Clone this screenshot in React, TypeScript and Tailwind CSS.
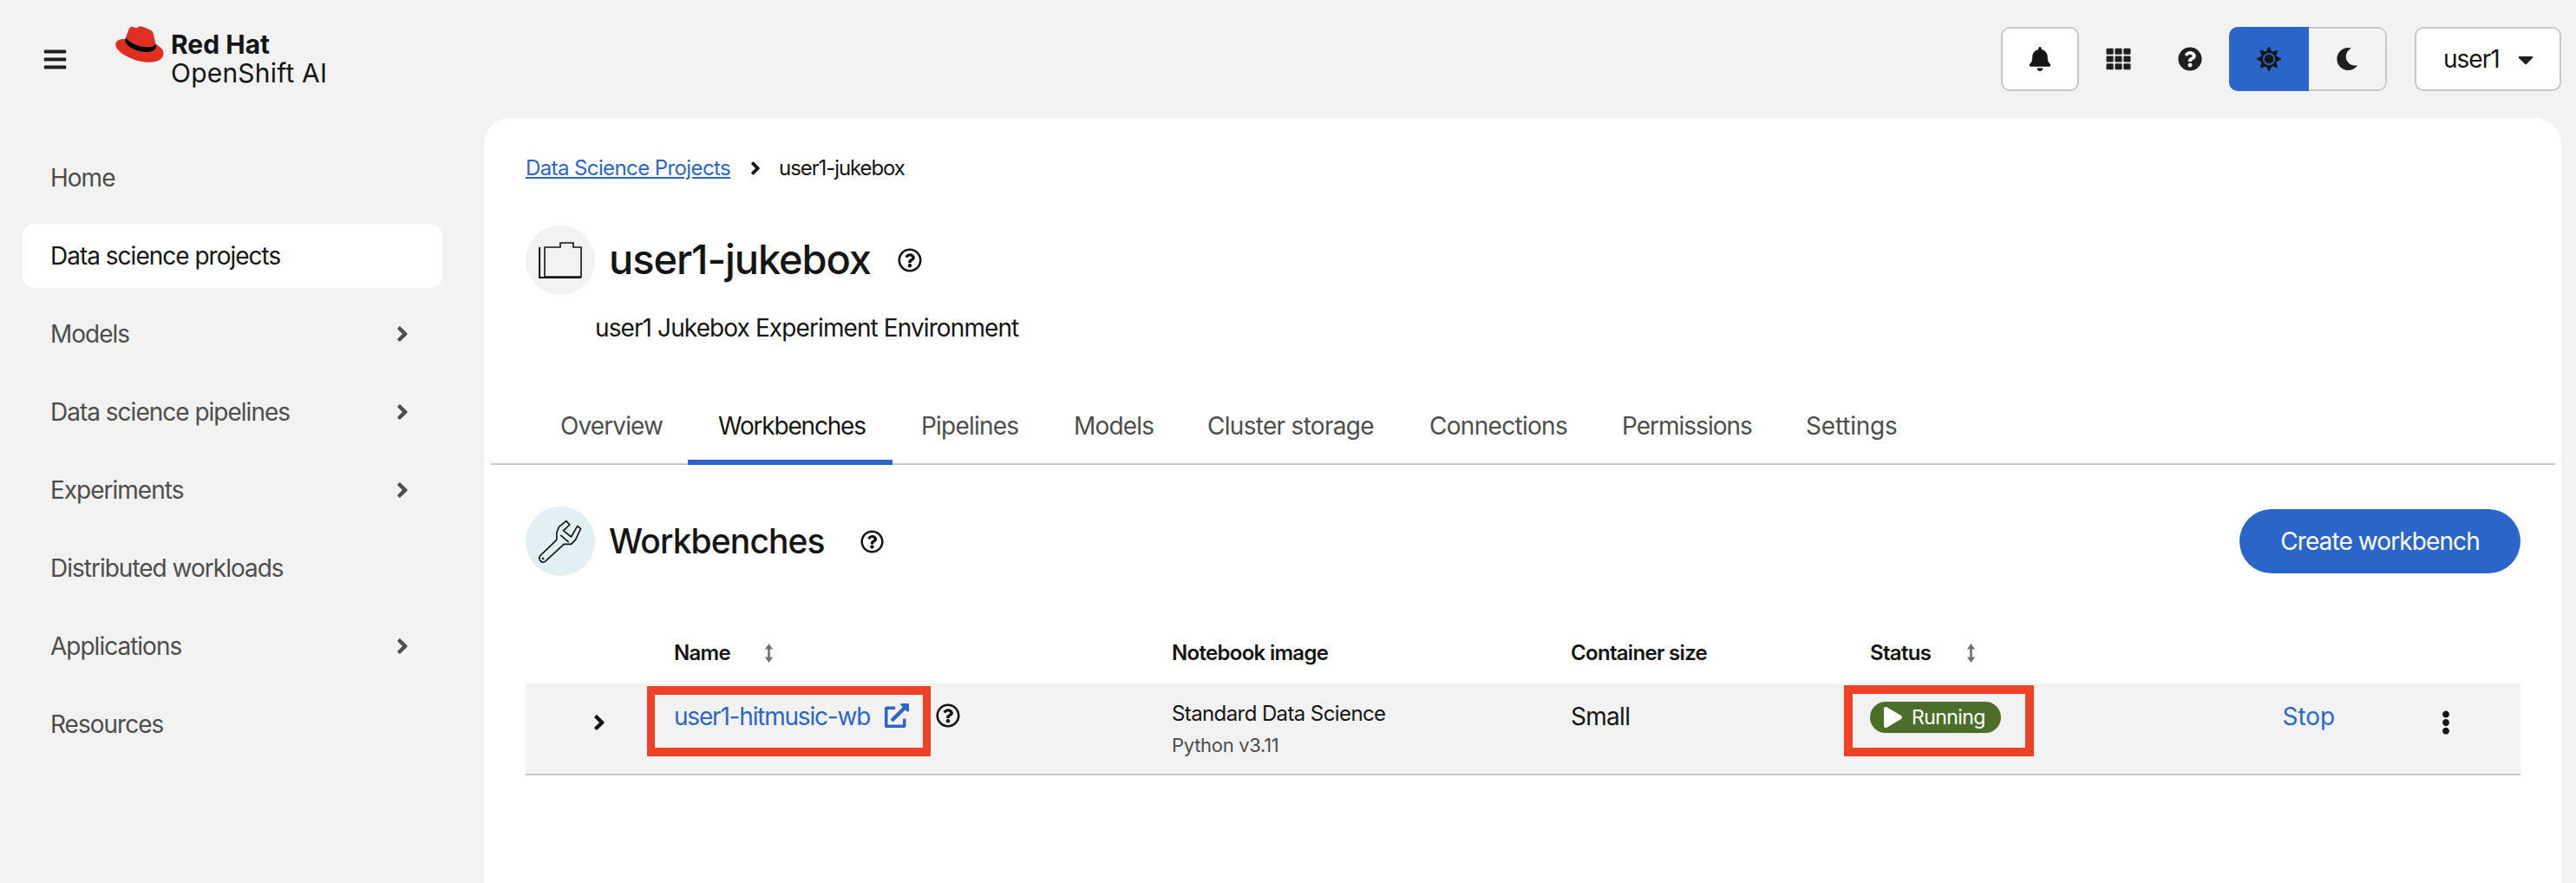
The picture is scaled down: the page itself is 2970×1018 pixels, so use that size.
import { FaAngleRight, FaBars, FaBell, FaCaretDown, FaEllipsisV, FaExternalLinkAlt, FaMoon, FaPlay, FaQuestionCircle, FaRegQuestionCircle, FaSun, FaTh } from 'react-icons/fa';

const navItems = [
  { label: 'Home' },
  { label: 'Data science projects', active: true },
  { label: 'Models', arrow: true },
  { label: 'Data science pipelines', arrow: true },
  { label: 'Experiments', arrow: true },
  { label: 'Distributed workloads' },
  { label: 'Applications', arrow: true },
  { label: 'Resources' },
];

const tabs = [
  { label: 'Overview', width: 'w-[179px] pl-[32px] pb-[18px] tracking-[-0.9px]' },
  { label: 'Workbenches', width: 'w-[236px] pl-[35px] pb-[12px] border-b-[6px] border-[#2b65c9] tracking-[-1.2px] text-[#151515]' },
  { label: 'Pipelines', width: 'w-[176px] pl-[33px] pb-[18px] tracking-[-0.8px]' },
  { label: 'Models', width: 'w-[155px] pl-[33px] pb-[18px] tracking-[-0.8px]' },
  { label: 'Cluster storage', width: 'w-[256px] pl-[32px] pb-[18px] tracking-[-0.7px]' },
  { label: 'Connections', width: 'w-[222px] pl-[32px] pb-[18px] tracking-[-0.7px]' },
  { label: 'Permissions', width: 'w-[212px] pl-[32px] pb-[18px] tracking-[-1px]' },
  { label: 'Settings', width: 'w-[160px] pl-[32px] pb-[18px] tracking-[-0.2px]' },
];

const SortIcon = () => (
  <svg viewBox="0 0 12 24" className="w-[11px] h-[24px] text-[#707070]" fill="currentColor">
    <path d="M6 0l5 7H7.4v10H11l-5 7-5-7h3.6V7H1z" />
  </svg>
);

const RedHatLogo = () => (
  <svg viewBox="0 0 192 145" className="w-[56px] h-[42px]">
    <path fill="#e02f20" d="M127.47 83.49c12.51 0 30.61-2.58 30.61-17.46a14 14 0 0 0-.31-3.42l-7.45-32.36c-1.72-7.12-3.23-10.35-15.73-16.6C124.89 8.69 103.76.5 97.51.5 91.69.5 90 8 83.06 8c-6.68 0-11.64-5.6-17.89-5.6-6 0-9.91 4.09-12.93 12.5 0 0-8.41 23.72-9.49 27.16a6.43 6.43 0 0 0-.22 1.94c0 9.22 36.3 39.45 84.94 39.45M160 72.07c1.73 8.19 1.73 9.05 1.73 10.13 0 14-15.74 21.77-36.43 21.77C78.54 104 37.58 76.6 37.58 58.49a18.45 18.45 0 0 1 1.51-7.33C22.27 52 .5 55 .5 74.22c0 31.48 74.59 70.28 133.65 70.28 45.28 0 56.7-20.48 56.7-36.65 0-12.72-11-27.16-30.83-35.78" />
    <path fill="#000" d="M160 72.07c1.73 8.19 1.73 9.05 1.73 10.13 0 14-15.74 21.77-36.43 21.77C78.54 104 37.58 76.6 37.58 58.49a18.45 18.45 0 0 1 1.51-7.33l3.66-9.06a6.43 6.43 0 0 0-.22 1.94c0 9.22 36.3 39.45 84.94 39.45 12.51 0 30.61-2.58 30.61-17.46a14 14 0 0 0-.31-3.42z" />
  </svg>
);

const FolderIcon = () => (
  <svg viewBox="0 0 50 42" className="w-[50px] h-[42px]" fill="none" stroke="#151515" strokeWidth="1.6">
    <path d="M7 6h18V1h15v5h9v34H7z" />
    <path d="M1 6v35h48" strokeWidth="2.2" />
  </svg>
);

const WrenchIcon = () => (
  <svg viewBox="60 70 155 150" className="w-[52px] h-[50px]" fill="none" stroke="#151515" strokeWidth="5" strokeLinejoin="round" strokeLinecap="round">
    <path d="M68 195L125 140V115L133 95L158 75L170 88L148 108L175 130L197 92L208 102L190 140L175 155H150L85 215C78 220 72 218 68 212C64 206 64 200 68 195Z" />
    <path d="M140 125L165 147" />
    <circle cx="78" cy="205" r="1.5" fill="#151515" />
  </svg>
);

const App = () => {
  return (
    <div className="w-[2970px] h-[1018px] overflow-hidden bg-[#f2f2f2] text-[#151515] font-['Inter',sans-serif] flex flex-col">
      <header className="h-[136px] shrink-0 flex items-center pr-[17px]">
        <FaBars className="ml-[49px] w-[29px] h-[29px] text-[#1f1f1f]" />
        <div className="ml-[55px] flex gap-[8px] -mt-[1px]">
          <div className="-mt-[5px]"><RedHatLogo /></div>
          <div className="flex flex-col leading-[33px]">
            <span className="text-[30px] font-bold">Red Hat</span>
            <span className="text-[30px] tracking-[0.2px]">OpenShift AI</span>
          </div>
        </div>
        <div className="ml-auto flex items-center">
          <button className="w-[90px] h-[74px] bg-white border-2 border-[#c7c7c7] rounded-[10px] flex items-center justify-center">
            <FaBell className="w-[26px] h-[28px] text-[#151515]" />
          </button>
          <FaTh className="ml-[31px] w-[29px] h-[28px] text-[#1f1f1f]" />
          <FaQuestionCircle className="ml-[54px] w-[28px] h-[28px] text-[#1f1f1f]" />
          <div className="ml-[31px] w-[182px] h-[74px] flex rounded-[10px] overflow-hidden">
            <div className="w-[92px] bg-[#2b65c9] flex items-center justify-center">
              <FaSun className="w-[28px] h-[28px] text-[#151515]" />
            </div>
            <div className="flex-1 border-2 border-l-0 border-[#c7c7c7] rounded-r-[10px] flex items-center justify-center">
              <FaMoon className="w-[26px] h-[28px] text-[#1f1f1f]" />
            </div>
          </div>
          <button className="ml-[32px] w-[169px] h-[74px] bg-white border-2 border-[#c7c7c7] rounded-[10px] flex items-center pl-[31px]">
            <span className="text-[28px] tracking-[-1px]">user1</span>
            <FaCaretDown className="ml-[21px] w-[18px] h-[29px] text-[#1f1f1f]" />
          </button>
        </div>
      </header>
      <div className="flex-1 flex min-h-0">
        <nav className="w-[558px] shrink-0 pl-[26px] pr-[48px] pt-[32px] flex flex-col">
          {navItems.map((item) => (
            <div
              key={item.label}
              className={`h-[74px] mb-[16px] rounded-[14px] pl-[32px] pr-[39px] flex items-center justify-between text-[28px] tracking-[-1px] ${item.active ? 'bg-white text-[#151515]' : 'text-[#4d4d4d]'}`}
            >
              <span>{item.label}</span>
              {item.arrow && <FaAngleRight className="w-[14px] h-[28px] text-[#4d4d4d]" />}
            </div>
          ))}
        </nav>
        <main className="flex-1 mr-[17px] bg-white rounded-t-[30px] flex flex-col">
          <div className="pl-[48px] pt-[40px]">
            <div className="flex items-center h-[36px] text-[24px] tracking-[-0.6px]">
              <a className="text-[#2b65c9] underline">Data Science Projects</a>
              <FaAngleRight className="ml-[23px] w-[12px] h-[24px]" />
              <span className="ml-[21px] tracking-[-1.1px]">user1-jukebox</span>
            </div>
            <div className="mt-[48px] flex items-center">
              <div className="w-[80px] h-[80px] rounded-full bg-[#f2f2f2] flex items-center justify-center"><FolderIcon /></div>
              <h1 className="ml-[16px] -mt-[2px] text-[47px] font-medium tracking-[-1.1px]">user1-jukebox</h1>
              <FaRegQuestionCircle className="ml-[31px] w-[28px] h-[28px]" />
            </div>
            <p className="mt-[20px] ml-[80px] text-[28px] tracking-[-0.9px] leading-[36px]">user1 Jukebox Experiment Environment</p>
          </div>
          <div className="ml-[8px] mr-[7px] mt-[68px] h-[72px] flex border-b-2 border-[#c7c7c7] pl-[48px] text-[28px] text-[#4d4d4d]">
            {tabs.map((t) => (
              <div key={t.label} className={`h-[72px] flex items-center ${t.width}`}>{t.label}</div>
            ))}
          </div>
          <div className="pr-[47px] pl-[48px]">
            <div className="mt-[48px] flex items-center">
              <div className="w-[80px] h-[80px] rounded-full bg-[#e0f0f3] flex items-center justify-center"><WrenchIcon /></div>
              <h2 className="ml-[16px] text-[39px] font-medium tracking-[-0.9px]">Workbenches</h2>
              <FaRegQuestionCircle className="ml-[41px] w-[27px] h-[27px]" />
              <button className="ml-auto w-[324px] h-[74px] rounded-full bg-[#2b65c9] text-white text-[28px] tracking-[-0.9px]">Create workbench</button>
            </div>
            <div className="mt-[64px] grid grid-cols-[171px_574px_460px_345px_1fr]">
              <div className="col-start-2 h-[60px] pb-[10px] flex items-center gap-[39px] text-[24px] font-semibold tracking-[-0.7px]"><span>Name</span><SortIcon /></div>
              <div className="h-[60px] pb-[10px] flex items-center text-[24px] font-semibold tracking-[-0.7px]">Notebook image</div>
              <div className="h-[60px] pb-[10px] flex items-center text-[24px] font-semibold tracking-[-0.7px]">Container size</div>
              <div className="h-[60px] pb-[10px] flex items-center gap-[41px] text-[24px] font-semibold tracking-[-0.7px]"><span>Status</span><SortIcon /></div>
            </div>
            <div className="grid grid-cols-[171px_574px_460px_345px_1fr] h-[106px] bg-[#f2f2f2] border-b-2 border-[#c7c7c7]">
              <div className="flex items-center pl-[78px] pb-[14px]"><FaAngleRight className="w-[14px] h-[28px]" /></div>
              <div className="relative pt-[20px] flex items-start text-[28px] leading-[36px] tracking-[-1.2px]">
                <a className="text-[#2b65c9]">user1-hitmusic-wb</a>
                <FaExternalLinkAlt className="ml-[17px] mt-[3px] w-[28px] h-[28px] text-[#2b65c9]" />
                <FaRegQuestionCircle className="ml-[31px] mt-[3px] w-[28px] h-[28px]" />
                <div className="absolute left-[-31px] top-[3px] w-[327px] h-[81px] border-y-[10px] border-x-[9px] border-[#ee4125]" />
              </div>
              <div className="pt-[20px]">
                <div className="text-[24px] tracking-[-0.6px] leading-[30px]">Standard Data Science</div>
                <div className="mt-[6px] text-[22px] tracking-[-0.3px] leading-[30px] text-[#4d4d4d]">Python v3.11</div>
              </div>
              <div className="pt-[20px] text-[28px] tracking-[-0.7px] leading-[36px]">Small</div>
              <div className="relative flex">
                <div className="mt-[21px] w-[151px] h-[36px] rounded-full bg-[#4b6f2b] text-white flex items-center pl-[16px] gap-[11px] text-[23px] tracking-[-0.6px]">
                  <FaPlay className="w-[21px] h-[24px]" /><span>Running</span>
                </div>
                <div className="absolute left-[-30px] top-[2px] w-[219px] h-[82px] border-y-[10px] border-x-[10px] border-[#ee4125]" />
                <a className="ml-auto mr-[214px] mt-[20px] text-[28px] leading-[36px] tracking-[-0.1px] text-[#2b65c9]">Stop</a>
                <FaEllipsisV className="absolute left-[650px] top-[31px] w-[28px] h-[28px]" />
              </div>
            </div>
          </div>
        </main>
      </div>
    </div>
  );
};

export default App;
